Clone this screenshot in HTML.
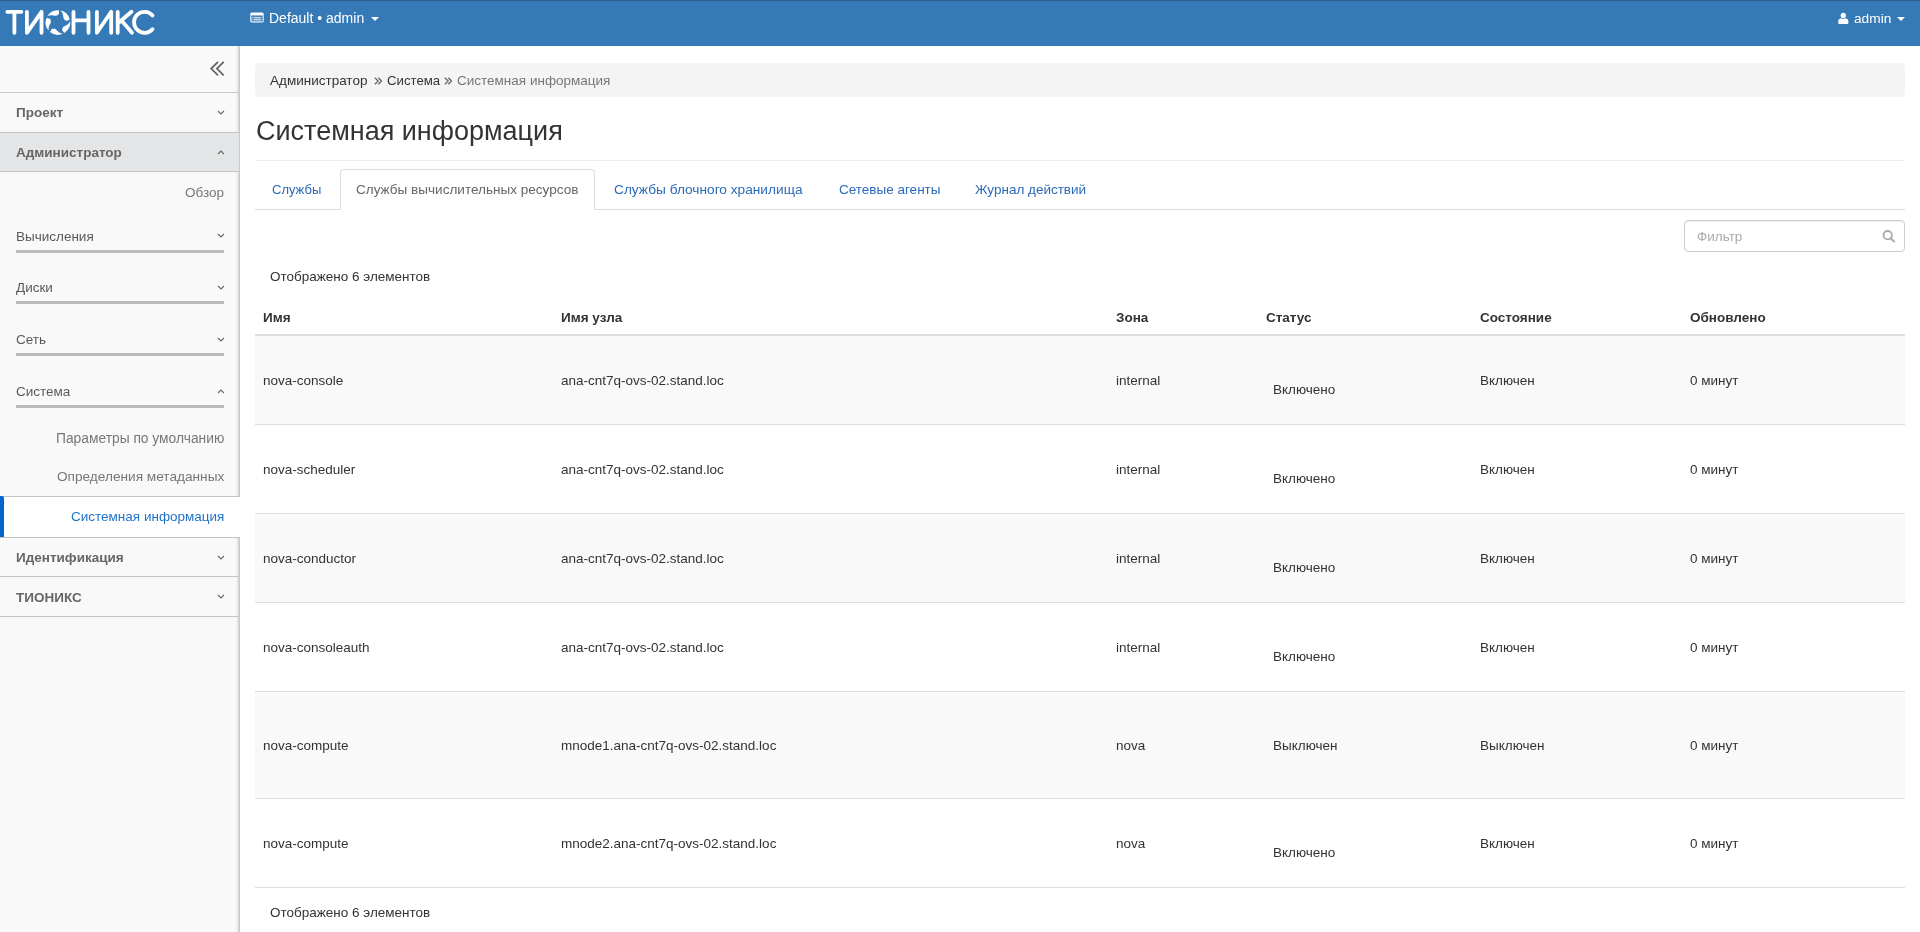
<!DOCTYPE html>
<html><head><meta charset="utf-8"><style>
html,body{margin:0;padding:0;width:1920px;height:932px;overflow:hidden;background:#fff;font-family:"Liberation Sans",sans-serif;-webkit-font-smoothing:antialiased;}
.t{position:absolute;white-space:nowrap;line-height:1;will-change:transform;}
.hl{position:absolute;height:1px;}
#hdr{position:absolute;left:0;top:0;width:1920px;height:46px;background:#357ab7;border-top:1px solid #2a5f92;box-sizing:border-box}
#side{position:absolute;left:0;top:46px;width:240px;height:886px;background:#f9f9f9;border-right:1px solid #c8c8c8;box-sizing:border-box;box-shadow:inset -3px 0 3px -2px rgba(0,0,0,0.18)}
.caret{position:absolute;width:0;height:0;border-left:4px solid transparent;border-right:4px solid transparent;border-top:4px solid #fff}
</style></head><body>
<div id="hdr"></div><svg id="logo" width="160" height="46" viewBox="0 0 160 46" style="position:absolute;left:0;top:0">
<g fill="none" stroke="#fff" stroke-width="3.8" stroke-linecap="round" stroke-linejoin="round">
<path d="M7.3 11.8H21.4M14.4 11.8V32.8"/>
<path d="M26.9 11.8V32.8L41.5 11.8V32.8"/>
<path d="M73.5 11.8V32.8M88.5 11.8V32.8M73.5 20.4H88.5"/>
<path d="M96.9 11.8V32.8L111.2 11.8V32.8"/>
<path d="M117.7 11.8V32.8M117.7 23.5L131.5 11.8M121.5 20.5L132 32.8"/>
<path d="M152.5 15.5A10.5 10.5 0 1 0 152.5 29.2"/>
</g>
<path fill="#fff" d="M46.84 17.11A12.3 12.3 0 0 1 58.76 10.23L59.10 13.99L58.62 14.29L58.18 14.59L57.77 14.88L57.39 15.15L57.03 15.37L56.68 15.55L56.33 15.68L55.96 15.75L55.58 15.77L55.17 15.74L54.72 15.68L54.23 15.60L53.70 15.50L53.11 15.41L52.49 15.32L51.83 15.27L51.15 15.26L50.44 15.30L49.73 15.40L49.04 15.58L48.38 15.83L47.77 16.17L47.25 16.59L46.84 17.11ZM59.61 10.32A12.3 12.3 0 0 1 69.83 19.52L66.36 21.01L65.93 20.65L65.51 20.32L65.11 20.02L64.74 19.74L64.41 19.47L64.13 19.19L63.90 18.89L63.72 18.57L63.59 18.22L63.48 17.82L63.40 17.37L63.33 16.88L63.26 16.34L63.17 15.76L63.05 15.14L62.90 14.49L62.70 13.84L62.45 13.18L62.13 12.54L61.74 11.94L61.30 11.39L60.79 10.91L60.22 10.54L59.61 10.32ZM70.01 20.36A12.3 12.3 0 0 1 64.42 32.93L61.93 30.08L62.15 29.57L62.33 29.06L62.49 28.59L62.64 28.15L62.80 27.75L62.97 27.40L63.18 27.09L63.43 26.82L63.73 26.58L64.08 26.36L64.48 26.15L64.92 25.93L65.41 25.69L65.94 25.43L66.49 25.13L67.06 24.78L67.62 24.39L68.17 23.94L68.68 23.44L69.13 22.89L69.52 22.30L69.81 21.67L69.99 21.02L70.01 20.36ZM63.67 33.36A12.3 12.3 0 0 1 49.99 31.92L51.93 28.68L52.49 28.72L53.03 28.74L53.53 28.74L53.99 28.75L54.42 28.78L54.81 28.84L55.16 28.94L55.50 29.10L55.82 29.31L56.14 29.57L56.47 29.88L56.81 30.24L57.19 30.63L57.60 31.05L58.06 31.48L58.56 31.92L59.11 32.33L59.70 32.71L60.33 33.04L61.00 33.31L61.68 33.49L62.37 33.57L63.05 33.54L63.67 33.36ZM49.36 31.35A12.3 12.3 0 0 1 46.50 17.89L50.18 18.73L50.31 19.28L50.46 19.79L50.61 20.27L50.75 20.72L50.85 21.13L50.91 21.52L50.93 21.89L50.88 22.25L50.78 22.62L50.63 23.01L50.44 23.42L50.20 23.86L49.95 24.34L49.67 24.86L49.40 25.43L49.15 26.04L48.92 26.69L48.74 27.37L48.63 28.07L48.58 28.79L48.62 29.49L48.75 30.18L48.99 30.81L49.36 31.35Z"/>
</svg><svg style="position:absolute;left:250px;top:12px" width="14" height="11" viewBox="0 0 14 11"><rect x="0.3" y="0.4" width="13.4" height="10.2" rx="1.6" fill="#fff"/><rect x="1.2" y="3" width="11.6" height="6.6" fill="#8fb4d9"/><path d="M1.2 4.6H12.8M2 6.6H12.8M2 8.6H12.8" stroke="#357ab7" stroke-width="0.9"/><path d="M3.8 5.9H10.8M3.8 7.9H10.8" stroke="#e6eef7" stroke-width="0.9"/></svg><div class="t" style="left:269px;top:11.15px;font-size:14px;color:#fff;">Default • admin</div>
<div class="caret" style="left:371px;top:17px"></div><svg style="position:absolute;left:1838px;top:12px" width="11" height="12" viewBox="0 0 11 12"><circle cx="5.3" cy="3.4" r="2.6" fill="#fff"/><path d="M0.2 11 Q0 8.6 0.8 7.6 Q1.8 6.4 3.2 6.3 Q5.3 7.4 7.4 6.3 Q8.8 6.4 9.8 7.6 Q10.6 8.6 10.4 11 Q10.3 12 9.3 12 H1.3 Q0.3 12 0.2 11Z" fill="#fff"/></svg><div class="t" style="left:1853.5px;top:12.40px;font-size:13.7px;color:#fff;">admin</div>
<div class="caret" style="left:1897px;top:17px"></div><div id="side"></div><div class="hl" style="left:0;top:92px;width:239px;background:#c9c9c9"></div><svg style="position:absolute;left:204px;top:56px" width="28" height="24" viewBox="0 0 28 24"><path d="M14 5.8L7.2 12.6L14 19.4M19.7 5.8L12.9 12.6L19.7 19.4" fill="none" stroke="#636363" stroke-width="1.75"/></svg><div class="t" style="left:16px;top:106.07px;font-size:13.5px;color:#666;font-weight:bold;">Проект</div>
<svg style="position:absolute;left:217px;top:109.5px" width="8" height="5" viewBox="0 0 8 5"><path d="M1 1L4 4L7 1" fill="none" stroke="#666" stroke-width="1.1"/></svg>
<div class="hl" style="left:0;top:132px;width:239px;background:#c4c4c4"></div><div style="position:absolute;left:0;top:133px;width:239px;height:38px;background:#e4e5e6"></div><div class="t" style="left:16px;top:145.57px;font-size:13.5px;color:#666;font-weight:bold;">Администратор</div>
<svg style="position:absolute;left:217px;top:149.5px" width="8" height="5" viewBox="0 0 8 5"><path d="M1 4L4 1L7 4" fill="none" stroke="#666" stroke-width="1.1"/></svg>
<div class="hl" style="left:0;top:171px;width:239px;background:#c4c4c4"></div><div class="t" style="right:1696px;top:185.57px;font-size:13.5px;color:#777;">Обзор</div>
<div class="t" style="left:16px;top:229.57px;font-size:13.5px;color:#5a5a5a;">Вычисления</div>
<svg style="position:absolute;left:217px;top:233px" width="8" height="5" viewBox="0 0 8 5"><path d="M1 1L4 4L7 1" fill="none" stroke="#666" stroke-width="1.1"/></svg>
<div class="hl" style="left:16px;top:250px;width:208px;height:3px;background:#bbb"></div><div class="t" style="left:16px;top:281.07px;font-size:13.5px;color:#5a5a5a;">Диски</div>
<svg style="position:absolute;left:217px;top:284.5px" width="8" height="5" viewBox="0 0 8 5"><path d="M1 1L4 4L7 1" fill="none" stroke="#666" stroke-width="1.1"/></svg>
<div class="hl" style="left:16px;top:301px;width:208px;height:3px;background:#bbb"></div><div class="t" style="left:16px;top:333.07px;font-size:13.5px;color:#5a5a5a;">Сеть</div>
<svg style="position:absolute;left:217px;top:336.5px" width="8" height="5" viewBox="0 0 8 5"><path d="M1 1L4 4L7 1" fill="none" stroke="#666" stroke-width="1.1"/></svg>
<div class="hl" style="left:16px;top:353px;width:208px;height:3px;background:#bbb"></div><div class="t" style="left:16px;top:385.07px;font-size:13.5px;color:#5a5a5a;">Система</div>
<svg style="position:absolute;left:217px;top:388.5px" width="8" height="5" viewBox="0 0 8 5"><path d="M1 4L4 1L7 4" fill="none" stroke="#666" stroke-width="1.1"/></svg>
<div class="hl" style="left:16px;top:405px;width:208px;height:3px;background:#bbb"></div><div class="t" style="right:1696px;top:431.82px;font-size:13.8px;color:#777;">Параметры по умолчанию</div>
<div class="t" style="right:1696px;top:469.95px;font-size:13.65px;color:#777;">Определения метаданных</div>
<div class="hl" style="left:0;top:496px;width:239px;background:#c4c4c4"></div><div style="position:absolute;left:0;top:497px;width:242px;height:40px;background:#fff"></div><div style="position:absolute;left:0;top:496px;width:4px;height:42px;background:#0466cc;border-radius:0 2px 2px 0/0 1.5px 1.5px 0"></div><div class="t" style="right:1696px;top:510.07px;font-size:13.5px;color:#1e72c9;">Системная информация</div>
<div class="hl" style="left:0;top:537px;width:239px;background:#c4c4c4"></div><div class="t" style="left:16px;top:551.07px;font-size:13.5px;color:#666;font-weight:bold;">Идентификация</div>
<svg style="position:absolute;left:217px;top:554.5px" width="8" height="5" viewBox="0 0 8 5"><path d="M1 1L4 4L7 1" fill="none" stroke="#666" stroke-width="1.1"/></svg>
<div class="hl" style="left:0;top:576px;width:239px;background:#c4c4c4"></div><div class="t" style="left:16px;top:590.57px;font-size:13.5px;color:#666;font-weight:bold;">ТИОНИКС</div>
<svg style="position:absolute;left:217px;top:594px" width="8" height="5" viewBox="0 0 8 5"><path d="M1 1L4 4L7 1" fill="none" stroke="#666" stroke-width="1.1"/></svg>
<div class="hl" style="left:0;top:616px;width:239px;background:#c4c4c4"></div><div style="position:absolute;left:255px;top:63px;width:1650px;height:34px;background:#f4f4f4;border-radius:4px"></div><div class="t" style="left:270px;top:73.57px;font-size:13.5px;color:#333;">Администратор</div>
<svg style="position:absolute;left:373.5px;top:76.5px" width="8" height="8" viewBox="0 0 8 8"><path d="M0.9 0.7L4.1 4L0.9 7.3M4.3 0.7L7.5 4L4.3 7.3" fill="none" stroke="#666" stroke-width="1.3"/></svg>
<div class="t" style="left:387px;top:73.83px;font-size:13.2px;color:#333;">Система</div>
<svg style="position:absolute;left:444px;top:76.5px" width="8" height="8" viewBox="0 0 8 8"><path d="M0.9 0.7L4.1 4L0.9 7.3M4.3 0.7L7.5 4L4.3 7.3" fill="none" stroke="#666" stroke-width="1.3"/></svg>
<div class="t" style="left:457px;top:73.57px;font-size:13.5px;color:#777;">Системная информация</div>
<div class="t" style="left:255.5px;top:118.14px;font-size:27px;color:#333;">Системная информация</div>
<div class="hl" style="left:255px;top:160px;width:1650px;background:#eee"></div><div class="hl" style="left:255px;top:209px;width:1650px;background:#ddd"></div><div style="position:absolute;left:340px;top:169px;width:255px;height:41px;background:#fff;border:1px solid #ddd;border-bottom:none;border-radius:4px 4px 0 0;box-sizing:border-box"></div><div class="t" style="left:271.8px;top:183.00px;font-size:13px;color:#2a6ab8;">Службы</div>
<div class="t" style="left:356.2px;top:182.53px;font-size:13.55px;color:#666;">Службы вычислительных ресурсов</div>
<div class="t" style="left:614.3px;top:183.00px;font-size:13.7px;color:#2a6ab8;">Службы блочного хранилища</div>
<div class="t" style="left:839px;top:182.57px;font-size:13.5px;color:#2a6ab8;">Сетевые агенты</div>
<div class="t" style="left:975px;top:182.57px;font-size:13.5px;color:#2a6ab8;">Журнал действий</div>
<div style="position:absolute;left:1684px;top:220px;width:221px;height:32px;border:1px solid #ccc;border-radius:4px;box-sizing:border-box;background:#fff;box-shadow:inset 0 1px 1px rgba(0,0,0,0.075)"></div><div class="t" style="left:1697px;top:230.07px;font-size:13.5px;color:#aaa;">Фильтр</div>
<svg style="position:absolute;left:1882px;top:229.6px" width="14" height="13" viewBox="0 0 14 13"><circle cx="5.7" cy="5.2" r="4.2" fill="none" stroke="#aaa" stroke-width="1.8"/><path d="M8.6 8.2L12 11.5" stroke="#aaa" stroke-width="2" stroke-linecap="round"/></svg><div class="t" style="left:270px;top:269.57px;font-size:13.5px;color:#333;">Отображено 6 элементов</div>
<div class="t" style="left:263px;top:310.57px;font-size:13.5px;color:#333;font-weight:bold;">Имя</div>
<div class="t" style="left:561px;top:310.57px;font-size:13.5px;color:#333;font-weight:bold;">Имя узла</div>
<div class="t" style="left:1116px;top:310.57px;font-size:13.5px;color:#333;font-weight:bold;">Зона</div>
<div class="t" style="left:1266px;top:310.57px;font-size:13.5px;color:#333;font-weight:bold;">Статус</div>
<div class="t" style="left:1480px;top:310.57px;font-size:13.5px;color:#333;font-weight:bold;">Состояние</div>
<div class="t" style="left:1690px;top:310.57px;font-size:13.5px;color:#333;font-weight:bold;">Обновлено</div>
<div class="hl" style="left:255px;top:334px;width:1650px;height:2px;background:#ddd"></div><div style="position:absolute;left:255px;top:336px;width:1650px;height:88px;background:#f9f9f9"></div><div class="hl" style="left:255px;top:424px;width:1650px;background:#ddd"></div><div class="t" style="left:263px;top:373.57px;font-size:13.5px;color:#333;">nova-console</div>
<div class="t" style="left:561px;top:373.57px;font-size:13.5px;color:#333;">ana-cnt7q-ovs-02.stand.loc</div>
<div class="t" style="left:1116px;top:373.57px;font-size:13.5px;color:#333;">internal</div>
<div class="t" style="left:1273px;top:382.57px;font-size:13.5px;color:#333;">Включено</div>
<div class="t" style="left:1480px;top:373.57px;font-size:13.5px;color:#333;">Включен</div>
<div class="t" style="left:1690px;top:373.57px;font-size:13.5px;color:#333;">0 минут</div>
<div class="hl" style="left:255px;top:513px;width:1650px;background:#ddd"></div><div class="t" style="left:263px;top:462.57px;font-size:13.5px;color:#333;">nova-scheduler</div>
<div class="t" style="left:561px;top:462.57px;font-size:13.5px;color:#333;">ana-cnt7q-ovs-02.stand.loc</div>
<div class="t" style="left:1116px;top:462.57px;font-size:13.5px;color:#333;">internal</div>
<div class="t" style="left:1273px;top:471.57px;font-size:13.5px;color:#333;">Включено</div>
<div class="t" style="left:1480px;top:462.57px;font-size:13.5px;color:#333;">Включен</div>
<div class="t" style="left:1690px;top:462.57px;font-size:13.5px;color:#333;">0 минут</div>
<div style="position:absolute;left:255px;top:514px;width:1650px;height:88px;background:#f9f9f9"></div><div class="hl" style="left:255px;top:602px;width:1650px;background:#ddd"></div><div class="t" style="left:263px;top:551.57px;font-size:13.5px;color:#333;">nova-conductor</div>
<div class="t" style="left:561px;top:551.57px;font-size:13.5px;color:#333;">ana-cnt7q-ovs-02.stand.loc</div>
<div class="t" style="left:1116px;top:551.57px;font-size:13.5px;color:#333;">internal</div>
<div class="t" style="left:1273px;top:560.57px;font-size:13.5px;color:#333;">Включено</div>
<div class="t" style="left:1480px;top:551.57px;font-size:13.5px;color:#333;">Включен</div>
<div class="t" style="left:1690px;top:551.57px;font-size:13.5px;color:#333;">0 минут</div>
<div class="hl" style="left:255px;top:691px;width:1650px;background:#ddd"></div><div class="t" style="left:263px;top:640.57px;font-size:13.5px;color:#333;">nova-consoleauth</div>
<div class="t" style="left:561px;top:640.57px;font-size:13.5px;color:#333;">ana-cnt7q-ovs-02.stand.loc</div>
<div class="t" style="left:1116px;top:640.57px;font-size:13.5px;color:#333;">internal</div>
<div class="t" style="left:1273px;top:649.57px;font-size:13.5px;color:#333;">Включено</div>
<div class="t" style="left:1480px;top:640.57px;font-size:13.5px;color:#333;">Включен</div>
<div class="t" style="left:1690px;top:640.57px;font-size:13.5px;color:#333;">0 минут</div>
<div style="position:absolute;left:255px;top:692px;width:1650px;height:106px;background:#f9f9f9"></div><div class="hl" style="left:255px;top:798px;width:1650px;background:#ddd"></div><div class="t" style="left:263px;top:738.57px;font-size:13.5px;color:#333;">nova-compute</div>
<div class="t" style="left:561px;top:738.57px;font-size:13.5px;color:#333;">mnode1.ana-cnt7q-ovs-02.stand.loc</div>
<div class="t" style="left:1116px;top:738.57px;font-size:13.5px;color:#333;">nova</div>
<div class="t" style="left:1273px;top:738.57px;font-size:13.5px;color:#333;">Выключен</div>
<div class="t" style="left:1480px;top:738.57px;font-size:13.5px;color:#333;">Выключен</div>
<div class="t" style="left:1690px;top:738.57px;font-size:13.5px;color:#333;">0 минут</div>
<div class="hl" style="left:255px;top:887px;width:1650px;background:#ddd"></div><div class="t" style="left:263px;top:836.57px;font-size:13.5px;color:#333;">nova-compute</div>
<div class="t" style="left:561px;top:836.57px;font-size:13.5px;color:#333;">mnode2.ana-cnt7q-ovs-02.stand.loc</div>
<div class="t" style="left:1116px;top:836.57px;font-size:13.5px;color:#333;">nova</div>
<div class="t" style="left:1273px;top:845.57px;font-size:13.5px;color:#333;">Включено</div>
<div class="t" style="left:1480px;top:836.57px;font-size:13.5px;color:#333;">Включен</div>
<div class="t" style="left:1690px;top:836.57px;font-size:13.5px;color:#333;">0 минут</div>
<div class="t" style="left:270px;top:905.57px;font-size:13.5px;color:#333;">Отображено 6 элементов</div>

</body></html>
